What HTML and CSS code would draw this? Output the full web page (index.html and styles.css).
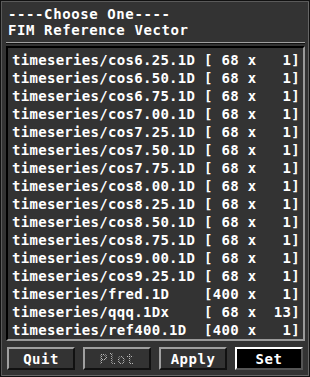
FILE: index.html
```html
<!DOCTYPE html>
<html lang="en">
<head>
  <meta charset="UTF-8" />
  <title>FIM Reference Vector</title>
  <link rel="stylesheet" href="styles.css">
</head>
<body>
  <div class="window">
    <div class="title">
      <div>----Choose One----</div>
      <div>FIM Reference Vector</div>
    </div>
    <div class="separator"></div>
    <div class="listbox" id="list"></div>
    <div class="buttons">
      <button class="btn">Quit</button>
      <button class="btn disabled">Plot</button>
      <button class="btn">Apply</button>
      <button class="btn set">Set</button>
    </div>
  </div>

  <script>
    const items = [
      "timeseries/cos6.25.1D [ 68 x   1]",
      "timeseries/cos6.50.1D [ 68 x   1]",
      "timeseries/cos6.75.1D [ 68 x   1]",
      "timeseries/cos7.00.1D [ 68 x   1]",
      "timeseries/cos7.25.1D [ 68 x   1]",
      "timeseries/cos7.50.1D [ 68 x   1]",
      "timeseries/cos7.75.1D [ 68 x   1]",
      "timeseries/cos8.00.1D [ 68 x   1]",
      "timeseries/cos8.25.1D [ 68 x   1]",
      "timeseries/cos8.50.1D [ 68 x   1]",
      "timeseries/cos8.75.1D [ 68 x   1]",
      "timeseries/cos9.00.1D [ 68 x   1]",
      "timeseries/cos9.25.1D [ 68 x   1]",
      "timeseries/fred.1D    [400 x   1]",
      "timeseries/qqq.1Dx    [ 68 x  13]",
      "timeseries/ref400.1D  [400 x   1]"
    ];

    const list = document.getElementById("list");
    items.forEach(text => {
      const row = document.createElement("div");
      row.className = "row";
      row.textContent = text;
      list.appendChild(row);
    });
  </script>
</body>
</html>
```

FILE: styles.css
```css
body {
  margin: 0;
  background: #000;
  font-family: 'DejaVu Sans Mono', 'Liberation Mono', monospace;
}

.window {
  width: 310px;
  height: 377px;
  box-sizing: border-box;
  background: #333;
  border: 1px solid #111;
  box-shadow: inset 1px 1px 0 #5a5a5a, inset -1px -1px 0 #666;
  padding: 5px 4px 0 5px;
}

.title {
  color: #fff;
  font-weight: bold;
  font-size: 14px;
  line-height: 16px;
  letter-spacing: 0.6px;
  padding-left: 2px;
}

.separator {
  margin-top: 4px;
  border-top: 1px solid #a0a0a0;
  border-bottom: 1px solid #111;
}

.listbox {
  margin-top: 2px;
  border: 2px solid;
  border-color: #000 #9a9a9a #9a9a9a #000;
  background: #333;
  padding: 3px 0 0 4px;
  height: 290px;
  box-sizing: border-box;
  height: 295px;
}

.row {
  color: #fff;
  font-weight: bold;
  font-size: 14px;
  line-height: 18px;
  letter-spacing: 0.3px;
  white-space: pre;
}

.buttons {
  display: flex;
  gap: 8px;
  margin-top: 6px;
  padding-left: 1px;
}

.btn {
  width: 68px;
  height: 23px;
  box-sizing: border-box;
  border: 2px solid;
  border-color: #a0a0a0 #111 #111 #a0a0a0;
  background: #333;
  color: #fff;
  font-family: 'DejaVu Sans Mono', monospace;
  font-weight: bold;
  font-size: 14px;
  letter-spacing: 0.5px;
  padding: 0;
}

.btn.disabled {
  color: transparent;
  font-weight: normal;
  background: #333;
}

.btn.disabled {
  background-image: repeating-conic-gradient(#bbb 0 25%, #333 0 50%);
  background-size: 2px 2px;
  -webkit-background-clip: text;
  background-clip: text;
}

.btn.set {
  background: #000;
  border-color: #fff #555 #555 #fff;
}
```
